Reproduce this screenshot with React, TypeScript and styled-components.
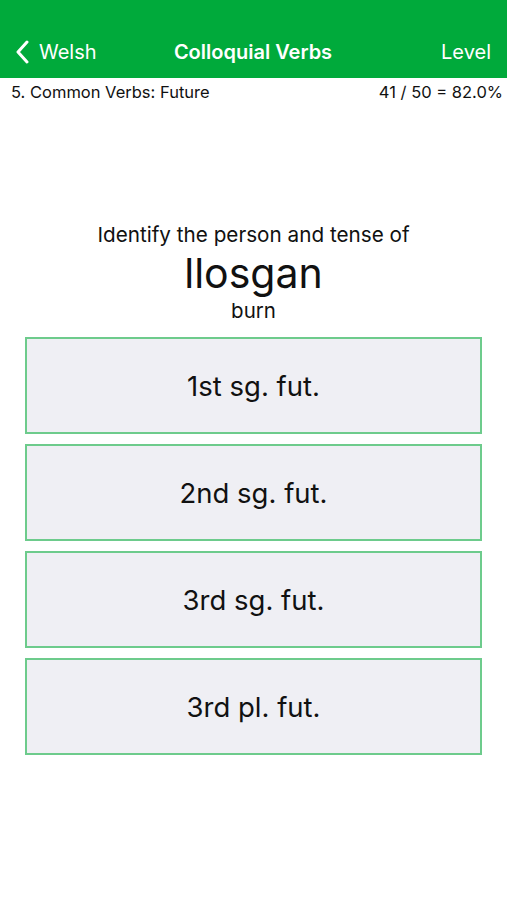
import React from "react";
import styled, { createGlobalStyle } from "styled-components";

const GlobalStyle = createGlobalStyle`
  html, body {
    margin: 0;
    padding: 0;
    background: #ffffff;
    font-family: "Inter", "Roboto", "Liberation Sans", sans-serif;
    color: #111111;
  }
`;

const Page = styled.div`
  width: 507px;
  min-height: 900px;
  display: flex;
  flex-direction: column;
`;

const NavBar = styled.header`
  height: 78px;
  background-color: #00aa3b;
  display: grid;
  grid-template-columns: 1fr auto 1fr;
  align-items: center;
  padding: 26px 16px 0 15px;
  box-sizing: border-box;
  color: #ffffff;
`;

const BackButton = styled.div`
  display: flex;
  align-items: center;
  gap: 10px;
  font-size: 20px;
  justify-self: start;
`;

const Title = styled.div`
  font-size: 20px;
  font-weight: 600;
`;

const NavAction = styled.div`
  font-size: 20px;
  justify-self: end;
`;

const InfoRow = styled.div`
  display: flex;
  justify-content: space-between;
  align-items: center;
  padding: 2px 4px 0 11px;
  height: 24px;
  font-size: 16.5px;
`;

const Question = styled.section`
  display: flex;
  flex-direction: column;
  align-items: center;
  margin-top: 118px;
`;

const Prompt = styled.div`
  font-size: 20.7px;
  line-height: 26px;
`;

const Word = styled.div`
  font-size: 41px;
  line-height: 50px;
`;

const Meaning = styled.div`
  font-size: 20.5px;
  line-height: 26px;
`;

const Options = styled.div`
  display: flex;
  flex-direction: column;
  gap: 10px;
  padding: 13px 25px 0 25px;
`;

const Option = styled.button`
  height: 97px;
  background-color: #efeff4;
  border: 2px solid #6dcb8c;
  font-family: inherit;
  font-size: 27.5px;
  color: #111111;
  cursor: pointer;
`;

const answers = ["1st sg. fut.", "2nd sg. fut.", "3rd sg. fut.", "3rd pl. fut."];

function App() {
  return (
    <Page>
      <GlobalStyle />
      <NavBar>
        <BackButton>
          <svg width="14" height="24" viewBox="0 0 14 24">
            <path d="M12 2 L3 12 L12 22" fill="none" stroke="#fff" strokeWidth="3" strokeLinecap="round" strokeLinejoin="round" />
          </svg>
          Welsh
        </BackButton>
        <Title>Colloquial Verbs</Title>
        <NavAction>Level</NavAction>
      </NavBar>
      <InfoRow>
        <span>5. Common Verbs: Future</span>
        <span>41 / 50 = 82.0%</span>
      </InfoRow>
      <Question>
        <Prompt>Identify the person and tense of</Prompt>
        <Word>llosgan</Word>
        <Meaning>burn</Meaning>
      </Question>
      <Options>
        {answers.map((a) => (
          <Option key={a}>{a}</Option>
        ))}
      </Options>
    </Page>
  );
}

export default App;
